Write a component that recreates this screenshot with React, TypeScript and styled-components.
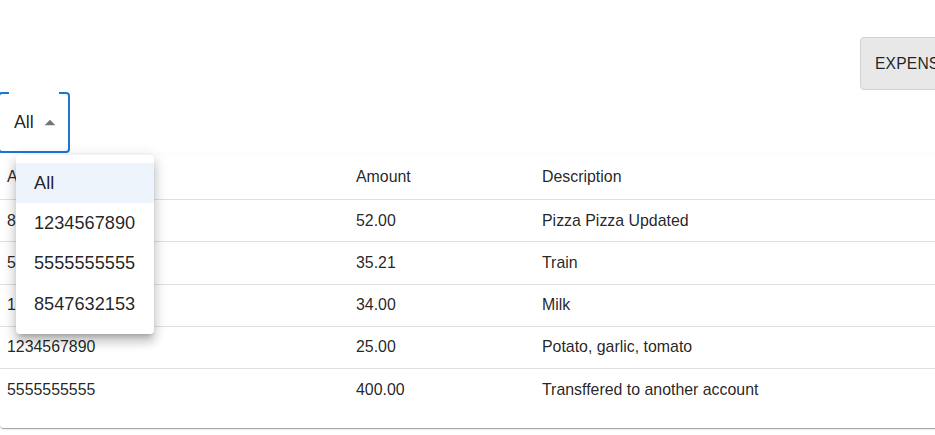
import React from "react";
import styled, { createGlobalStyle } from "styled-components";

const Global = createGlobalStyle`
  html, body { margin: 0; padding: 0; background: #fff; }
  body { font-family: "Liberation Sans", Arial, sans-serif; color: rgba(0,0,0,0.87); overflow: hidden; }
`;

const Page = styled.div`
  position: relative;
  width: 935px;
  height: 435px;
  overflow: hidden;
`;

const Toolbar = styled.div`
  display: flex;
  justify-content: flex-end;
  padding-top: 37px;
`;

const ActionButton = styled.button`
  height: 53px;
  margin-right: -60px;
  padding: 0 14px;
  width: 135px;
  text-align: left;
  background: #e8e8e8;
  border: 1px solid #d2d2d2;
  border-radius: 4px;
  font-family: "Liberation Sans", Arial, sans-serif;
  font-size: 15.6px;
  color: rgba(0,0,0,0.87);
  text-transform: uppercase;
  letter-spacing: 0.2px;
`;

const SelectRow = styled.div`
  display: flex;
  margin-top: 2px;
`;

const SelectBox = styled.div`
  position: relative;
  margin-left: -2px;
  width: 72px;
  height: 61px;
  box-sizing: border-box;
  display: flex;
  align-items: center;
  padding-left: 16px;
  gap: 3px;
  font-size: 17.8px;
`;

const Outline = styled.fieldset`
  position: absolute;
  inset: -5px 0 0 0;
  margin: 0;
  padding: 0 0 0 9px;
  border: 2px solid #1976d2;
  border-radius: 4px;
  pointer-events: none;
`;

const Notch = styled.legend`
  width: 50px;
  padding: 0;
  height: 11px;
`;

const Paper = styled.div`
  margin-top: 1px;
  width: 980px;
  background: #fff;
  border-radius: 4px;
  padding-bottom: 17px;
  box-shadow: 0 2px 1px -1px rgba(0,0,0,0.2), 0 1px 1px 0 rgba(0,0,0,0.14), 0 1px 3px 0 rgba(0,0,0,0.12);
`;

const Table = styled.table`
  width: 100%;
  table-layout: fixed;
  border-collapse: collapse;
  font-size: 15.9px;
`;

const Cell = styled.td<{ $w?: number; $last?: boolean }>`
  width: ${(p) => (p.$w ? `${p.$w}px` : "auto")};
  padding: 0 0 0 7px;
  height: ${(p) => (p.$last ? 42 : 41.25)}px;
  text-align: left;
  font-weight: normal;
  color: rgba(0,0,0,0.87);
  border-bottom: ${(p) => (p.$last ? "none" : "1px solid #e0e0e0")};
`;

const HeadCell = styled(Cell).attrs({ as: "th" })`
  height: 45px;
`;

const Menu = styled.ul`
  position: absolute;
  left: 16px;
  top: 155px;
  width: 138px;
  margin: 0;
  padding: 8px 0 10px;
  list-style: none;
  background: #fff;
  border-radius: 4px;
  font-size: 18.2px;
  box-shadow: 0 5px 5px -3px rgba(0,0,0,0.2), 0 8px 10px 1px rgba(0,0,0,0.14), 0 3px 14px 2px rgba(0,0,0,0.12);
`;

const Item = styled.li<{ $selected?: boolean }>`
  height: 40.33px;
  display: flex;
  align-items: center;
  padding-left: 18px;
  color: rgba(0,0,0,0.87);
  background: ${(p) => (p.$selected ? "rgba(25,118,210,0.08)" : "transparent")};
`;

const rows = [
  ["8547632153", "52.00", "Pizza Pizza Updated"],
  ["5555555555", "35.21", "Train"],
  ["1234567890", "34.00", "Milk"],
  ["1234567890", "25.00", "Potato, garlic, tomato"],
  ["5555555555", "400.00", "Transffered to another account"],
];

export default function App() {
  return (
    <Page>
      <Global />
      <Toolbar>
        <ActionButton>Expenses</ActionButton>
      </Toolbar>
      <SelectRow>
        <SelectBox>
          <span>All</span>
          <svg width="26" height="26" viewBox="0 0 24 24" aria-hidden="true">
            <path d="M7 14l5-5 5 5z" fill="rgba(0,0,0,0.54)" />
          </svg>
          <Outline aria-hidden="true">
            <Notch />
          </Outline>
        </SelectBox>
      </SelectRow>
      <Paper>
        <Table>
          <thead>
            <tr>
              <HeadCell $w={342}>Account</HeadCell>
              <HeadCell $w={179}>Amount</HeadCell>
              <HeadCell>Description</HeadCell>
            </tr>
          </thead>
          <tbody>
            {rows.map((r, i) => (
              <tr key={i}>
                <Cell $last={i === rows.length - 1}>{r[0]}</Cell>
                <Cell $last={i === rows.length - 1}>{r[1]}</Cell>
                <Cell $last={i === rows.length - 1}>{r[2]}</Cell>
              </tr>
            ))}
          </tbody>
        </Table>
      </Paper>
      <Menu>
        <Item $selected>All</Item>
        <Item>1234567890</Item>
        <Item>5555555555</Item>
        <Item>8547632153</Item>
      </Menu>
    </Page>
  );
}
